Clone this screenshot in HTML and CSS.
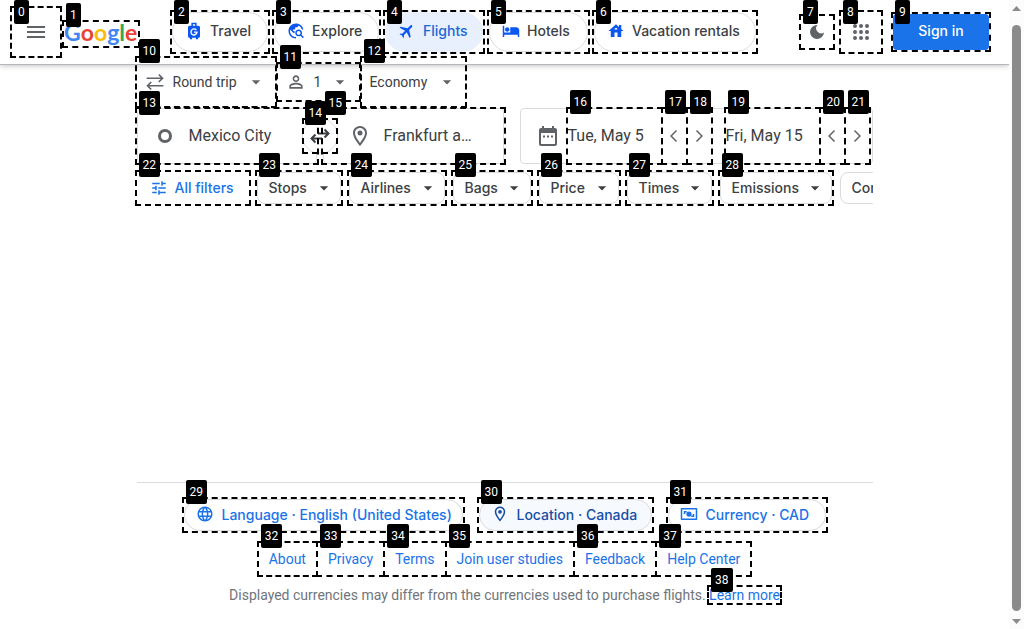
FILE: index.html
```html
<!DOCTYPE html>
<html lang="en">
<head>
<meta charset="utf-8">
<meta name="viewport" content="width=device-width, initial-scale=1">
<title>Google Flights</title>
<link rel="stylesheet" href="styles.css">
</head>
<body>
<svg class="sprite" aria-hidden="true">
  <symbol id="drop" viewBox="0 0 24 24"><path d="M7 10l5 5 5-5z"/></symbol>
  <symbol id="pin" viewBox="0 0 24 24"><path d="M12 2C8.130 2 5 5.130 5 9c0 5.250 7 13 7 13s7-7.750 7-13c0-3.870-3.130-7-7-7zM7 9c0-2.760 2.240-5 5-5s5 2.240 5 5c0 2.880-2.880 7.190-5 9.880C9.920 16.210 7 11.850 7 9z"/><circle cx="12" cy="9" r="2.500"/></symbol>
  <symbol id="prev" viewBox="0 0 24 24"><path d="M15 5.500L8.500 12l6.500 6.500" fill="none" stroke="currentColor" stroke-width="1.800"/></symbol>
  <symbol id="next" viewBox="0 0 24 24"><path d="M9 5.500l6.500 6.500L9 18.500" fill="none" stroke="currentColor" stroke-width="1.800"/></symbol>
</svg>
<div class="page">
  <header class="header">
    <div class="mark mark-top-6"><button class="icon-btn menu" aria-label="Main menu"><svg class="i24" viewBox="0 0 24 24"><path d="M3 18h18v-2H3v2zm0-5h18v-2H3v2zm0-7v2h18V6H3z"/></svg></button><span class="tag">0</span></div>
    <div class="mark logo-mark"><a class="logo" href="#" aria-label="Google"><span class="b">G</span><span class="r">o</span><span class="y">o</span><span class="b">g</span><span class="g">l</span><span class="r">e</span></a><span class="tag">1</span></div>
    <nav class="tabs">
      <div class="mark"><button class="tab travel"><svg class="i18" viewBox="0 0 24 24"><path d="M8.500 1h7v4H18a2 2 0 0 1 2 2v12a2 2 0 0 1-2 2h-.5v2h-3v-2h-5v2h-3v-2H6a2 2 0 0 1-2-2V7a2 2 0 0 1 2-2h2.500zM10.500 3v2h3V3z"/><path d="M15 10.600a4 4 0 1 0 1 2.900h-4" fill="none" stroke="#fff" stroke-width="1.800"/></svg>Travel</button><span class="tag">2</span></div>
      <div class="mark"><button class="tab explore"><svg class="i18" viewBox="0 0 24 24"><path d="M19.300 16.900c.4-.7.7-1.500.7-2.400 0-2.500-2-4.500-4.500-4.500S11 12 11 14.500s2 4.500 4.500 4.500c.9 0 1.700-.3 2.400-.7l3.200 3.200 1.400-1.400-3.200-3.200zm-3.800.1c-1.400 0-2.500-1.100-2.500-2.500s1.100-2.500 2.500-2.500 2.500 1.100 2.500 2.500-1.100 2.500-2.500 2.500zM12 20v2C6.480 22 2 17.520 2 12S6.480 2 12 2c4.840 0 8.870 3.440 9.800 8h-2.070c-.64-2.460-2.400-4.470-4.730-5.410V5c0 1.100-.9 2-2 2h-2v2c0 .55-.45 1-1 1H8v2h2v3H9l-4.790-4.790C4.080 10.790 4 11.380 4 12c0 4.410 3.590 8 8 8z"/></svg>Explore</button><span class="tag">3</span></div>
      <div class="mark"><button class="tab flights" aria-current="page"><svg class="i18" viewBox="0 0 24 24"><path transform="rotate(45 12 12)" d="M21 16v-2l-8-5V3.500c0-.83-.67-1.500-1.500-1.500S10 2.670 10 3.500V9l-8 5v2l8-2.500V19l-2 1.500V22l3.500-1 3.500 1v-1.500L13 19v-5.500l8 2.500z"/></svg>Flights</button><span class="tag">4</span></div>
      <div class="mark"><button class="tab hotels"><svg class="i18" viewBox="0 0 24 24"><path d="M7 13c1.660 0 3-1.340 3-3S8.660 7 7 7s-3 1.340-3 3 1.340 3 3 3zm12-6h-8v7H3V5H1v15h2v-3h18v3h2v-9c0-2.210-1.790-4-4-4z"/></svg>Hotels</button><span class="tag">5</span></div>
      <div class="mark"><button class="tab rentals"><svg class="i18" viewBox="0 0 24 24"><path d="M19 9.300V4h-3v2.600L12 3 2 12h3v8h5v-6h4v6h5v-8h3L19 9.300zm-9 .7c0-1.100.9-2 2-2s2 .9 2 2h-4z"/></svg>Vacation rentals</button><span class="tag">6</span></div>
    </nav>
    <div class="account">
      <div class="mark theme-mark"><button class="icon-btn theme" aria-label="Change appearance"><svg class="i20" viewBox="0 0 20 20"><path d="M10.500 3A7 7 0 1 0 17 10.500 5 5 0 0 1 10.500 3z"/></svg></button><span class="tag">7</span></div>
      <div class="mark"><button class="icon-btn apps" aria-label="Google apps"><svg class="i24" viewBox="0 0 24 24"><circle cx="6" cy="6" r="2"/><circle cx="12" cy="6" r="2"/><circle cx="18" cy="6" r="2"/><circle cx="6" cy="12" r="2"/><circle cx="12" cy="12" r="2"/><circle cx="18" cy="12" r="2"/><circle cx="6" cy="18" r="2"/><circle cx="12" cy="18" r="2"/><circle cx="18" cy="18" r="2"/></svg></button><span class="tag">8</span></div>
      <div class="mark signin-mark"><a class="signin" href="#">Sign in</a><span class="tag">9</span></div>
    </div>
  </header>

  <main class="content">
    <div class="options">
      <div class="mark option trip"><svg class="i20" viewBox="0 0 24 24"><path d="M2 7.500h19M16.500 3l4.500 4.500-4.500 4.500M22 16.500H3M7.500 12L3 16.500 7.500 21" fill="none" stroke="currentColor" stroke-width="2"/></svg><select aria-label="Ticket type"><option>Round trip</option><option>One way</option></select><svg class="i20 caret"><use href="#drop"/></svg><span class="tag">10</span></div>
      <div class="mark"><button class="option people" aria-label="1 passenger"><svg class="i20" viewBox="0 0 24 24"><path d="M12 5.900c1.160 0 2.100.94 2.100 2.100s-.94 2.100-2.100 2.100S9.900 9.160 9.900 8s.94-2.100 2.100-2.100m0 9c2.970 0 6.100 1.460 6.100 2.100v1.100H5.900V17c0-.64 3.130-2.100 6.100-2.100M12 4C9.790 4 8 5.790 8 8s1.790 4 4 4 4-1.790 4-4-1.790-4-4-4zm0 9c-2.670 0-8 1.340-8 4v3h16v-3c0-2.660-5.330-4-8-4z"/></svg><span class="count">1</span><svg class="i20"><use href="#drop"/></svg></button><span class="tag">11</span></div>
      <div class="mark option cabin"><select aria-label="Seating class"><option>Economy</option><option>Business</option></select><svg class="i20 caret"><use href="#drop"/></svg><span class="tag">12</span></div>
    </div>

    <form class="search">
      <div class="places">
        <div class="mark field"><svg class="i24" viewBox="0 0 24 24"><circle cx="12" cy="12" r="5.500" fill="none" stroke="currentColor" stroke-width="3"/></svg><input type="text" aria-label="Where from?" value="Mexico City"><span class="tag">13</span></div>
        <div class="mark swap-mark"><button type="button" class="swap" aria-label="Swap origin and destination"><svg class="i20" viewBox="0 0 20 20"><path d="M8 7.500h10.500M14.500 3.500l4 4-4 4M12 12.500H1.500M5.500 8.500l-4 4 4 4" fill="none" stroke="currentColor" stroke-width="2"/></svg></button><span class="tag">14</span></div>
        <div class="mark field destination"><svg class="i24"><use href="#pin"/></svg><input type="text" aria-label="Where to?" value="Frankfurt a…"><span class="tag">15</span></div>
      </div>
      <div class="dates">
        <svg class="i24 calendar" viewBox="0 0 24 24"><path d="M19 4h-1V2h-2v2H8V2H6v2H5a2 2 0 0 0-2 2v14c0 1.100.9 2 2 2h14c1.100 0 2-.9 2-2V6c0-1.100-.9-2-2-2zm0 16H5V9h14v11zM7 11.500h2v2H7zm4 0h2v2h-2zm4 0h2v2h-2z"/></svg>
        <div class="mark date"><input type="text" aria-label="Departure" value="Tue, May 5"><span class="tag">16</span></div>
        <div class="mark"><button type="button" class="step" aria-label="Earlier departure"><svg class="i20"><use href="#prev"/></svg></button><span class="tag">17</span></div>
        <div class="mark"><button type="button" class="step" aria-label="Later departure"><svg class="i20"><use href="#next"/></svg></button><span class="tag">18</span></div>
        <div class="mark date return"><input type="text" aria-label="Return" value="Fri, May 15"><span class="tag">19</span></div>
        <div class="mark"><button type="button" class="step" aria-label="Earlier return"><svg class="i20"><use href="#prev"/></svg></button><span class="tag">20</span></div>
        <div class="mark"><button type="button" class="step" aria-label="Later return"><svg class="i20"><use href="#next"/></svg></button><span class="tag">21</span></div>
      </div>
    </form>

    <div class="filters">
      <div class="mark"><button class="filter all"><svg class="i18" viewBox="0 0 24 24"><path d="M3 17v2h6v-2H3zM3 5v2h10V5H3zm10 16v-2h8v-2h-8v-2h-2v6h2zM7 9v2H3v2h4v2h2V9H7zm14 4v-2H11v2h10zm-6-4h2V7h4V5h-4V3h-2v6z"/></svg>All filters</button><span class="tag">22</span></div>
      <div class="mark"><button class="filter stops">Stops<svg class="i20"><use href="#drop"/></svg></button><span class="tag">23</span></div>
      <div class="mark"><button class="filter airlines">Airlines<svg class="i20"><use href="#drop"/></svg></button><span class="tag">24</span></div>
      <div class="mark"><button class="filter bags">Bags<svg class="i20"><use href="#drop"/></svg></button><span class="tag">25</span></div>
      <div class="mark"><button class="filter price">Price<svg class="i20"><use href="#drop"/></svg></button><span class="tag">26</span></div>
      <div class="mark"><button class="filter times">Times<svg class="i20"><use href="#drop"/></svg></button><span class="tag">27</span></div>
      <div class="mark"><button class="filter emissions">Emissions<svg class="i20"><use href="#drop"/></svg></button><span class="tag">28</span></div>
      <div class="overflow"><button class="filter airports">Connecting airports</button></div>
    </div>
  </main>

  <footer class="footer">
    <div class="locale">
      <div class="mark"><button class="chip language"><svg class="i18" viewBox="0 0 24 24"><path d="M11.990 2C6.470 2 2 6.480 2 12s4.470 10 9.990 10C17.520 22 22 17.520 22 12S17.520 2 11.990 2zm6.930 6h-2.950c-.32-1.250-.78-2.450-1.380-3.560 1.840.63 3.370 1.910 4.330 3.560zM12 4.040c.83 1.200 1.480 2.530 1.910 3.960h-3.820c.43-1.430 1.080-2.760 1.910-3.960zM4.260 14C4.100 13.360 4 12.690 4 12s.1-1.360.26-2h3.380c-.08.66-.14 1.320-.14 2 0 .68.06 1.340.14 2H4.260zm.82 2h2.950c.32 1.250.78 2.450 1.380 3.560-1.840-.63-3.370-1.900-4.330-3.560zm2.950-8H5.080c.96-1.660 2.490-2.930 4.330-3.560C8.810 5.550 8.350 6.750 8.030 8zM12 19.960c-.83-1.200-1.480-2.530-1.910-3.960h3.820c-.43 1.430-1.080 2.760-1.910 3.960zM14.340 14H9.660c-.09-.66-.16-1.320-.16-2 0-.68.07-1.350.16-2h4.680c.09.65.16 1.320.16 2 0 .68-.07 1.340-.16 2zm.25 5.560c.6-1.110 1.060-2.310 1.380-3.560h2.950c-.96 1.650-2.490 2.930-4.330 3.560zM16.360 14c.08-.66.14-1.320.14-2 0-.68-.06-1.340-.14-2h3.380c.16.64.26 1.310.26 2s-.1 1.360-.26 2h-3.380z"/></svg>Language · English (United States)</button><span class="tag">29</span></div>
      <div class="mark"><button class="chip location"><svg class="i18"><use href="#pin"/></svg>Location · Canada</button><span class="tag">30</span></div>
      <div class="mark"><button class="chip currency"><svg class="i18" viewBox="0 0 24 24"><path fill-rule="evenodd" d="M2 4h20a1 1 0 0 1 1 1v14a1 1 0 0 1-1 1H2a1 1 0 0 1-1-1V5a1 1 0 0 1 1-1zm1 2v12h18V6z"/><circle cx="12" cy="12" r="3.500"/><path d="M5 8h4v2H7v2H5zM19 16h-4v-2h2v-2h2z"/></svg>Currency · CAD</button><span class="tag">31</span></div>
    </div>
    <nav class="links">
      <div class="mark"><a href="#">About</a><span class="tag">32</span></div>
      <div class="mark"><a href="#">Privacy</a><span class="tag">33</span></div>
      <div class="mark"><a href="#">Terms</a><span class="tag">34</span></div>
      <div class="mark"><a href="#">Join user studies</a><span class="tag">35</span></div>
      <div class="mark"><a href="#">Feedback</a><span class="tag">36</span></div>
      <div class="mark"><a href="#">Help Center</a><span class="tag">37</span></div>
    </nav>
    <p class="note">Displayed currencies may differ from the currencies used to purchase flights. <span class="mark inline"><a href="#">Learn more</a><span class="tag">38</span></span></p>
  </footer>
</div>
<div class="scrollbar" aria-hidden="true">
  <svg class="arrow" viewBox="0 0 15 15"><path d="M3 11l4.500-5 4.500 5z"/></svg>
  <div class="thumb"></div>
  <svg class="arrow" viewBox="0 0 15 15"><path d="M3 5l4.500 5 4.500-5z"/></svg>
</div>
</body>
</html>
```
FILE: styles.css
```css
* { box-sizing: border-box; }

body {
  margin: 0;
  display: flex;
  min-height: 100vh;
  background: #fff;
  color: #3c4043;
  font-family: Roboto, "Liberation Sans", sans-serif;
  font-size: 14px;
}

button, input, select {
  font: inherit;
  color: inherit;
  margin: 0;
  padding: 0;
  border: 0;
  background: none;
}

a { text-decoration: none; color: #1a73e8; }
svg { fill: currentColor; flex: none; display: block; }
.sprite { position: absolute; width: 0; height: 0; }
.i18 { width: 18px; height: 18px; }
.i20 { width: 20px; height: 20px; }
.i24 { width: 24px; height: 24px; }

.page { flex: 1; min-width: 0; display: flex; flex-direction: column; }

/* numbered outlines */
.mark { position: relative; flex: none; }
.mark::after {
  content: "";
  position: absolute;
  inset: -2px;
  border: 2px dashed #000;
  pointer-events: none;
  z-index: 5;
}
.tag {
  position: absolute;
  left: 2px;
  top: -19px;
  z-index: 6;
  height: 24px;
  padding: 0 4px;
  border-radius: 2px;
  background: #000;
  color: #fff;
  font: 12px/24px Roboto, sans-serif;
}

/* header */
.header {
  display: flex;
  align-items: center;
  height: 65px;
  padding: 0 20px 1px 12px;
  border-bottom: 1px solid #b4b7bc;
  box-shadow: 0 1px 5px rgba(60, 64, 67, .3);
}
.header .tag { top: -12px; }
.header .mark-top-6 .tag { top: -8px; }
.header .logo-mark .tag { top: -19px; }
.header .theme-mark .tag { top: -16px; }
.header .signin-mark .tag { top: -14px; }
.icon-btn { display: flex; align-items: center; justify-content: center; color: #5f6368; }
.menu { width: 48px; height: 48px; }
.theme { width: 32px; height: 32px; }
.apps { width: 40px; height: 40px; }
.logo-mark { margin: 4px 0 0 4px; }
.logo {
  display: flex;
  width: 74px;
  height: 24px;
  font: 700 23px/20px Lato, sans-serif;
}
.logo .b { color: #4285f4; }
.logo .r { color: #ea4335; }
.logo .y { color: #fbbc05; }
.logo .g { color: #34a853; }
.tabs { display: flex; gap: 6px; margin-left: 34px; }
.tab, .chip, .filter, .signin {
  padding-bottom: 2px;
  font-family: Inter, sans-serif;
  font-weight: 500;
  font-size: 14px;
  white-space: nowrap;
}
.tab {
  display: flex;
  align-items: center;
  gap: 7px;
  height: 40px;
  padding-left: 12px;
  border: 1px solid #dadce0;
  border-radius: 20px;
}
.tab svg { color: #0b57f0; }
.travel { width: 96px; }
.explore { width: 105px; }
.flights { width: 98px; background: #e8f0fe; border-color: #e8f0fe; color: #1967d2; }
.hotels { width: 99px; }
.rentals { width: 162px; }
.account { display: flex; align-items: center; gap: 8px; margin-left: auto; }
.signin-mark { margin-left: 4px; }
.signin {
  display: flex;
  align-items: center;
  justify-content: center;
  width: 96px;
  height: 36px;
  border-radius: 4px;
  background: #1a73e8;
  color: #fff;
}

/* search */
.content { width: 100%; max-width: 736px; margin: -7px auto 0; }
.options { display: flex; align-items: center; gap: 3px; height: 48px; }
.option { display: flex; align-items: center; color: #5f6368; }
.option select { appearance: none; height: 48px; color: #3c4043; flex: 1; }
.option .caret { pointer-events: none; }
.trip { width: 138px; padding: 0 9px 0 8px; gap: 8px; }
.people { width: 81px; height: 36px; padding: 0 9px 0 8px; }
.count { flex: 1; padding-left: 8px; text-align: left; color: #3c4043; }
.cabin { width: 103px; padding: 0 8px; }
.search { display: flex; gap: 16px; margin-top: 2px; font-size: 16px; }
.places { display: flex; align-items: center; }
.field {
  display: flex;
  align-items: center;
  gap: 12px;
  width: 180px;
  height: 56px;
  padding: 0 12px 1px 15px;
  border: 1px solid #dadce0;
  border-radius: 4px;
  color: #5f6368;
}
.field::after { inset: -2px -3px; }
.field input { width: 100%; min-width: 0; height: 48px; color: #3c4043; }
.field .tag { left: 1px; top: -18px; }
.destination { width: 181px; padding-left: 24px; }
.swap-mark { margin: 0 -15px; }
.swap-mark::after { inset: 0; }
.swap-mark .tag { left: 3px; top: -17px; }
.swap {
  position: relative;
  z-index: 4;
  display: flex;
  align-items: center;
  justify-content: center;
  width: 36px;
  height: 36px;
  border: 1px solid #dadce0;
  border-radius: 50%;
  background: #fff;
}
.dates {
  flex: 1;
  display: flex;
  align-items: center;
  gap: 2px;
  height: 56px;
  padding: 0 3px 0 15px;
  border: 1px solid #dadce0;
  border-radius: 4px;
}
.calendar { color: #5f6368; margin-right: 6px; }
.date { flex: 1; min-width: 0; }
.date input { display: block; width: 100%; height: 54px; padding-bottom: 1px; }
.return { margin-left: 13px; }
.step { display: flex; align-items: center; justify-content: center; width: 23px; height: 54px; color: #5f6368; }

/* filters */
.filters { display: flex; gap: 8px; margin-top: 8px; }
.filter {
  display: flex;
  align-items: center;
  justify-content: space-between;
  height: 32px;
  padding: 0 6px 1px 11px;
  border: 1px solid #dadce0;
  border-radius: 8px;
}
.all { width: 112px; padding-left: 12px; justify-content: start; gap: 7px; border-color: transparent; color: #1a73e8; }
.stops { width: 84px; }
.airlines { width: 96px; }
.bags { width: 78px; }
.price { width: 80px; }
.times { width: 85px; }
.emissions { width: 112px; }
.overflow { flex: 1; min-width: 0; overflow: hidden; }

/* footer */
.footer { width: 100%; max-width: 736px; margin: auto auto 0; padding: 16px 0 24px; border-top: 1px solid #dadce0; }
.locale { display: flex; justify-content: center; gap: 16px; }
.chip {
  display: flex;
  align-items: center;
  gap: 8px;
  height: 32px;
  padding-left: 11px;
  border: 1px solid #dadce0;
  border-radius: 16px;
  color: #1a73e8;
}
.language { width: 279px; }
.location { width: 173px; background: #f6f9fe; color: #174ea6; }
.currency { width: 158px; }
.links { display: flex; justify-content: center; gap: 2px; margin-top: 12px; }
.links a { display: block; padding: 0 10px; line-height: 32px; }
.note { margin: 10px 0 0; line-height: 20px; text-align: center; color: #70757a; }
.inline { white-space: nowrap; }

/* scrollbar */
.scrollbar { width: 15px; flex: none; display: flex; flex-direction: column; align-items: center; background: #fcfcfc; color: #8b8b8b; }
.arrow { width: 15px; height: 15px; }
.thumb { flex: 1; width: 9px; margin: 10px 0 3px; border-radius: 5px; background: #8b8b8b; }
```
